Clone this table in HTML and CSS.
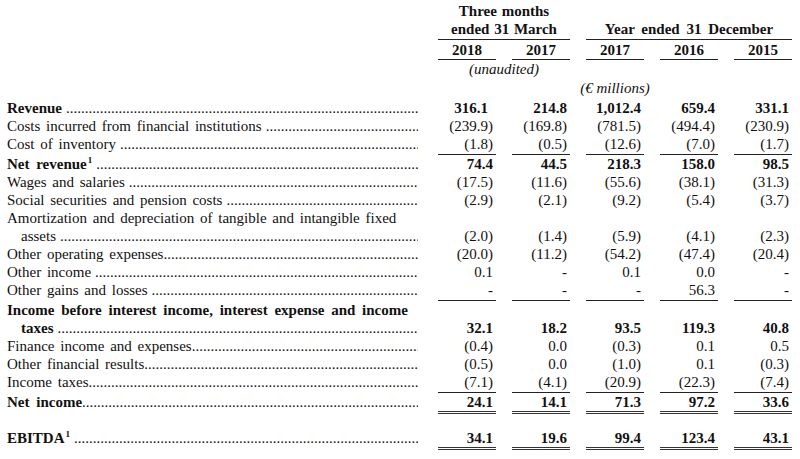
FILE: index.html
```html
<!DOCTYPE html>
<html lang="en">
<head>
<meta charset="utf-8">
<title>Income statement</title>
<link rel="stylesheet" href="styles.css">
</head>
<body>
<div class="sheet">
  <div class="row head1">
    <div class="lbl-empty"></div>
    <div class="hcell span2">Three months<br>ended 31 March</div>
    <div class="hcell span3 bottom">Year ended 31 December</div>
  </div>
  <div class="row head2">
    <div class="lbl-empty"></div>
    <div class="year">2018</div>
    <div class="year">2017</div>
    <div class="year">2017</div>
    <div class="year">2016</div>
    <div class="year">2015</div>
  </div>
  <div class="row head3">
    <div class="lbl-empty"></div>
    <div class="note span2">(unaudited)</div>
  </div>
  <div class="row head4">
    <div class="lbl-empty"></div>
    <div class="note span5">(€ millions)</div>
  </div>

  <div class="row bold">
    <div class="lbl"><span class="t">Revenue</span><span class="dots sp"></span></div>
    <div class="num hang">316.1</div><div class="num">214.8</div><div class="num">1,012.4</div><div class="num">659.4</div><div class="num">331.1</div>
  </div>
  <div class="row">
    <div class="lbl"><span class="t">Costs incurred from financial institutions</span><span class="dots sp"></span></div>
    <div class="num">(239.9)</div><div class="num">(169.8)</div><div class="num">(781.5)</div><div class="num">(494.4)</div><div class="num">(230.9)</div>
  </div>
  <div class="row rule">
    <div class="lbl"><span class="t">Cost of inventory</span><span class="dots sp"></span></div>
    <div class="num">(1.8)</div><div class="num">(0.5)</div><div class="num">(12.6)</div><div class="num">(7.0)</div><div class="num">(1.7)</div>
  </div>
  <div class="row bold">
    <div class="lbl"><span class="t">Net revenue<sup>1</sup></span><span class="dots sp"></span></div>
    <div class="num">74.4</div><div class="num">44.5</div><div class="num">218.3</div><div class="num">158.0</div><div class="num">98.5</div>
  </div>
  <div class="row">
    <div class="lbl"><span class="t">Wages and salaries</span><span class="dots sp"></span></div>
    <div class="num">(17.5)</div><div class="num">(11.6)</div><div class="num">(55.6)</div><div class="num">(38.1)</div><div class="num">(31.3)</div>
  </div>
  <div class="row">
    <div class="lbl"><span class="t">Social securities and pension costs</span><span class="dots sp"></span></div>
    <div class="num">(2.9)</div><div class="num">(2.1)</div><div class="num">(9.2)</div><div class="num">(5.4)</div><div class="num">(3.7)</div>
  </div>
  <div class="row">
    <div class="lbl two">
      <div class="line1">Amortization and depreciation of tangible and intangible fixed</div>
      <div class="lead"><span class="t ind">assets</span><span class="dots sp"></span></div>
    </div>
    <div class="num">(2.0)</div><div class="num">(1.4)</div><div class="num">(5.9)</div><div class="num">(4.1)</div><div class="num">(2.3)</div>
  </div>
  <div class="row">
    <div class="lbl"><span class="t">Other operating expenses</span><span class="dots"></span></div>
    <div class="num">(20.0)</div><div class="num">(11.2)</div><div class="num">(54.2)</div><div class="num">(47.4)</div><div class="num">(20.4)</div>
  </div>
  <div class="row">
    <div class="lbl"><span class="t">Other income</span><span class="dots sp"></span></div>
    <div class="num">0.1</div><div class="num">-</div><div class="num">0.1</div><div class="num">0.0</div><div class="num">-</div>
  </div>
  <div class="row rule">
    <div class="lbl"><span class="t">Other gains and losses</span><span class="dots sp"></span></div>
    <div class="num">-</div><div class="num">-</div><div class="num">-</div><div class="num">56.3</div><div class="num">-</div>
  </div>
  <div class="row bold">
    <div class="lbl two">
      <div class="line1">Income before interest income, interest expense and income</div>
      <div class="lead"><span class="t ind">taxes</span><span class="dots sp"></span></div>
    </div>
    <div class="num">32.1</div><div class="num">18.2</div><div class="num">93.5</div><div class="num">119.3</div><div class="num">40.8</div>
  </div>
  <div class="row">
    <div class="lbl"><span class="t">Finance income and expenses</span><span class="dots"></span></div>
    <div class="num">(0.4)</div><div class="num">0.0</div><div class="num">(0.3)</div><div class="num">0.1</div><div class="num">0.5</div>
  </div>
  <div class="row">
    <div class="lbl"><span class="t">Other financial results</span><span class="dots"></span></div>
    <div class="num">(0.5)</div><div class="num">0.0</div><div class="num">(1.0)</div><div class="num">0.1</div><div class="num">(0.3)</div>
  </div>
  <div class="row rule">
    <div class="lbl"><span class="t">Income taxes</span><span class="dots"></span></div>
    <div class="num">(7.1)</div><div class="num">(4.1)</div><div class="num">(20.9)</div><div class="num">(22.3)</div><div class="num">(7.4)</div>
  </div>
  <div class="row bold double">
    <div class="lbl"><span class="t">Net income</span><span class="dots"></span></div>
    <div class="num">24.1</div><div class="num">14.1</div><div class="num">71.3</div><div class="num">97.2</div><div class="num">33.6</div>
  </div>
  <div class="row bold double total">
    <div class="lbl"><span class="t">EBITDA<sup>1</sup></span><span class="dots sp"></span></div>
    <div class="num">34.1</div><div class="num">19.6</div><div class="num">99.4</div><div class="num">123.4</div><div class="num">43.1</div>
  </div>
</div>
</body>
</html>
```

FILE: styles.css
```css
html, body {
  margin: 0;
  padding: 0;
  background: #ffffff;
}

body {
  font-family: "Liberation Serif", "Times New Roman", serif;
  font-size: 15px;
  line-height: 18px;
  color: #111111;
}

.sheet {
  padding: 2px 0 0 7px;
}

.row {
  display: grid;
  grid-template-columns: 415px repeat(5, 58px);
  column-gap: 16px;
}

.row > * {
  min-width: 0;
}

/* header */
.head1 .hcell {
  font-weight: bold;
  text-align: center;
  border-bottom: 1px solid #222;
  padding-bottom: 1px;
  word-spacing: 1px;
}

.span2 { grid-column: 2 / span 2; }
.span3 { grid-column: 4 / span 3; }
.span5 { grid-column: 2 / span 5; }

.hcell.bottom {
  display: flex;
  align-items: flex-end;
  justify-content: center;
  word-spacing: 3px;
}

.head2 .year {
  font-weight: bold;
  text-align: center;
  padding-top: 1px;
  border-bottom: 1px solid #222;
}

.note {
  font-style: italic;
  text-align: center;
}

.head3 .note {
  line-height: 19px;
}

.head4 .note {
  line-height: 18px;
}

.head4 {
  margin-bottom: 2px;
}

/* body rows */
.lbl,
.lead {
  display: flex;
  white-space: nowrap;
  overflow: hidden;
  padding-right: 4px;
  word-spacing: 2px;
}

.lbl.two {
  display: block;
  padding-right: 0;
}

.bold .lbl {
  word-spacing: 3px;
}

.line1 {
  white-space: nowrap;
}

.t {
  flex: none;
}

.ind {
  padding-left: 14px;
}

.dots {
  flex: 1;
  overflow: hidden;
  font-weight: normal;
  min-width: 0;
  word-spacing: 0;
}

.dots.sp {
  margin-left: 4px;
}

.dots::before {
  content: "..............................................................................................................................................";
}

sup {
  font-size: 9px;
  line-height: 0;
  vertical-align: 6px;
  margin-left: 1px;
}

.num {
  text-align: right;
  padding-right: 3px;
  align-self: end;
}

.num.hang {
  padding-right: 8px;
}

.bold {
  font-weight: bold;
}

.rule > * {
  padding-bottom: 1px;
}

.rule > .num {
  border-bottom: 1px solid #222;
}

.double > .num {
  border-bottom: 3px double #333;
}

.double > * {
  padding-bottom: 0;
}

.total {
  margin-top: 15px;
}
```
